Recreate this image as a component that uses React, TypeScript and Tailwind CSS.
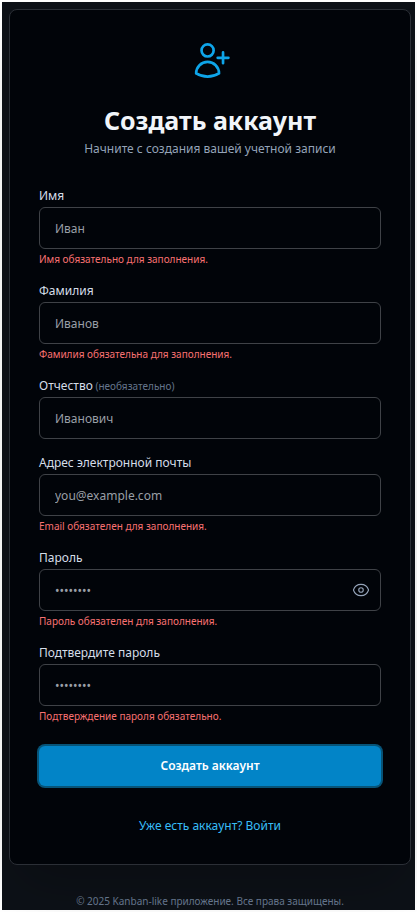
import { useState } from "react";
import { HiOutlineEye } from "react-icons/hi2";

type Field = {
  id: string;
  label: string;
  hint?: string;
  placeholder: string;
  type: string;
  error?: string;
};

const fields: Field[] = [
  { id: "firstName", label: "Имя", placeholder: "Иван", type: "text", error: "Имя обязательно для заполнения." },
  { id: "lastName", label: "Фамилия", placeholder: "Иванов", type: "text", error: "Фамилия обязательна для заполнения." },
  { id: "middleName", label: "Отчество", hint: "(необязательно)", placeholder: "Иванович", type: "text" },
  { id: "email", label: "Адрес электронной почты", placeholder: "you@example.com", type: "email", error: "Email обязателен для заполнения." },
  { id: "password", label: "Пароль", placeholder: "••••••••", type: "password", error: "Пароль обязателен для заполнения." },
  { id: "confirm", label: "Подтвердите пароль", placeholder: "••••••••", type: "password", error: "Подтверждение пароля обязательно." },
];

function UserPlusIcon() {
  return (
    <svg className="size-[43px] text-[#0ea5e9]" viewBox="0 0 24 24" fill="none" stroke="currentColor" strokeWidth="1.5" strokeLinecap="round" strokeLinejoin="round" aria-hidden="true">
      <path d="M19 7.5v3m0 0v3m0-3h3m-3 0h-3m-2.25-4.125a3.375 3.375 0 1 1-6.75 0 3.375 3.375 0 0 1 6.75 0ZM4 19.235v-.11a6.375 6.375 0 0 1 12.75 0v.109A12.318 12.318 0 0 1 10.374 21c-2.331 0-4.512-.645-6.374-1.766Z" />
    </svg>
  );
}

function FormField({ field }: { field: Field }) {
  const [visible, setVisible] = useState(false);
  const hasToggle = field.id === "password";
  return (
    <div>
      <label htmlFor={field.id} className="block text-xs leading-[22px] text-[#d5dde8]">
        {field.label}
        {field.hint && <span className="text-[10px] leading-none text-[#64748b]"> {field.hint}</span>}
      </label>
      <div className="relative">
        <input
          id={field.id}
          type={hasToggle && visible ? "text" : field.type}
          placeholder={field.placeholder}
          aria-invalid={Boolean(field.error)}
          className="block h-[42px] w-full rounded-md border border-[#3f4247] bg-transparent px-[15px] text-xs text-slate-100 placeholder:text-[#999fa6] focus:border-sky-500 focus:outline-none"
        />
        {hasToggle && (
          <button
            type="button"
            aria-label="Показать пароль"
            onClick={() => setVisible(!visible)}
            className="absolute inset-y-0 right-0 flex items-center pr-[11px] text-[#94a3b8]"
          >
            <HiOutlineEye className="size-[18px]" />
          </button>
        )}
      </div>
      {field.error && <p className="mt-[3px] text-[10px] leading-[15px] text-[#f87171]">{field.error}</p>}
    </div>
  );
}

export default function App() {
  return (
    <div className="min-h-screen bg-white p-[2px] font-['Noto_Sans',sans-serif]">
      <div className="bg-[#0d1117] pt-[7px] pr-1 pl-[7px]">
        <main className="rounded-lg border border-[#2b2f36] bg-[#010409] px-[29px] pt-[29px] pb-[29px] shadow-2xl">
          <header className="flex flex-col items-center text-center">
            <UserPlusIcon />
            <h1 className="mt-[21px] text-[25px] leading-[34px] font-bold text-[#f1f5f9]">Создать аккаунт</h1>
            <p className="mt-[2px] text-xs leading-5 text-[#94a3b8]">Начните с создания вашей учетной записи</p>
          </header>
          <form noValidate className="mt-[26px]" onSubmit={(e) => e.preventDefault()}>
            <div className="flex flex-col gap-[13px]">
              {fields.map((field) => (
                <FormField key={field.id} field={field} />
              ))}
            </div>
            <button type="submit" className="mt-[22px] block h-10 w-full rounded-md bg-[#0284c7] text-xs font-semibold text-white ring-2 ring-[#075478]">
              Создать аккаунт
            </button>
          </form>
          <p className="mt-[31px] text-center text-xs leading-[18px]">
            <a href="#login" className="text-[#38bdf8]">Уже есть аккаунт? Войти</a>
          </p>
        </main>
        <footer className="pt-7 text-center text-[10px] leading-[17px] text-[#64748b]">
          © 2025 Kanban-like приложение. Все права защищены.
        </footer>
      </div>
    </div>
  );
}
